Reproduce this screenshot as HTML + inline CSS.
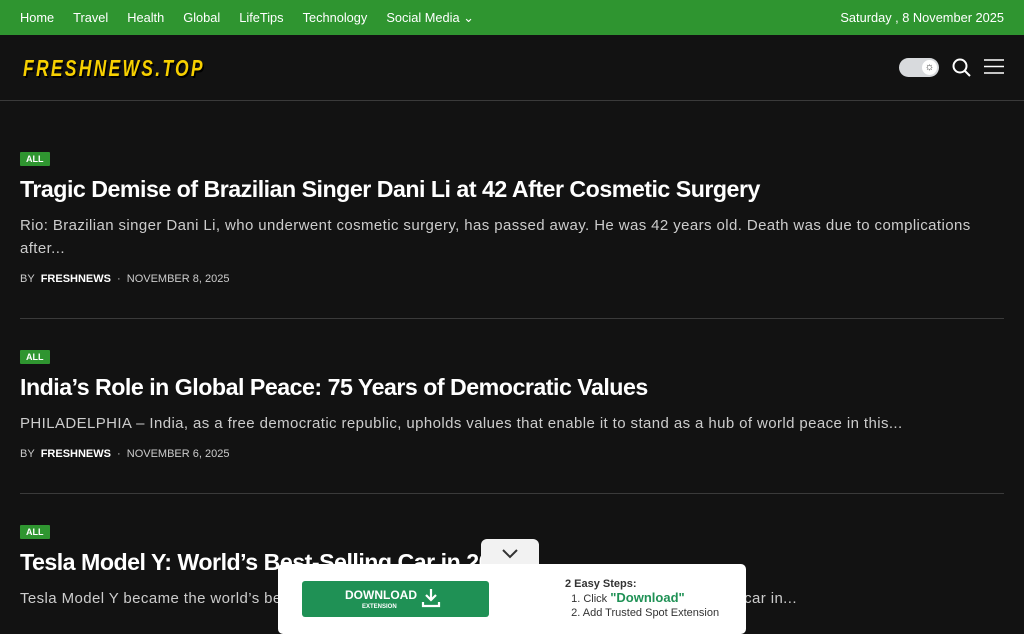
<!DOCTYPE html>
<html><head><meta charset="utf-8"><style>
*{margin:0;padding:0;box-sizing:border-box}
body{width:1024px;height:629px;overflow:hidden;background:#121212;font-family:"Liberation Sans",sans-serif;color:#fff;position:relative}
.top{height:35px;background:#2f9530;display:flex;align-items:center;padding:0 20px;font-size:12.8px}
.top a{margin-right:19px;color:#fff}
.top .date{margin-left:auto}
.hdr{height:66px;border-bottom:1px solid #3a3a3a;position:relative}
.art{position:absolute;left:20px;right:20px}
.tag{display:inline-block;background:#2f9530;color:#fff;font-size:9px;font-weight:bold;padding:2px 6px;border-radius:1px}
h2{font-size:23.2px;font-weight:bold;letter-spacing:-0.5px;margin-top:7px;line-height:30px}
p{color:#ccc;font-size:15px;line-height:23px;margin-top:10px;letter-spacing:0.4px}
.meta{font-size:11px;color:#ccc;margin-top:13px}
.meta b{color:#fff;margin:0 6px}
hr{position:absolute;left:20px;right:20px;border:0;border-top:1px solid #3a3a3a}
</style></head><body>
<div class="top"><a>Home</a><a>Travel</a><a>Health</a><a>Global</a><a>LifeTips</a><a>Technology</a><a>Social Media ⌄</a><span class="date">Saturday , 8 November 2025</span></div>
<div class="hdr">
<div style="position:absolute;left:23px;top:20px;font-size:23px;font-weight:900;font-style:italic;color:#f7d000;letter-spacing:3px;text-shadow:2px 2px 0 #000;transform:scaleX(0.76);transform-origin:left">FRESHNEWS.TOP</div>
<div style="position:absolute;left:899px;top:23px;width:40px;height:19px;border-radius:10px;background:#d8dadd"><div style="position:absolute;right:2px;top:2px;width:15px;height:15px;border-radius:50%;background:#fff;color:#333;font-size:11px;text-align:center;line-height:15px">☼</div></div>
<svg style="position:absolute;left:952px;top:23px" width="19" height="19" viewBox="0 0 19 19"><circle cx="8" cy="8" r="6.5" stroke="#fff" stroke-width="2" fill="none"/><line x1="13" y1="13" x2="18" y2="18" stroke="#fff" stroke-width="2"/></svg>
<svg style="position:absolute;left:984px;top:24px" width="20" height="16"><path d="M0 1H20M0 7.5H20M0 14H20" stroke="#fff" stroke-width="1.6"/></svg>
</div>
<div class="art" style="top:149px"><span class="tag">ALL</span><h2>Tragic Demise of Brazilian Singer Dani Li at 42 After Cosmetic Surgery</h2><p>Rio: Brazilian singer Dani Li, who underwent cosmetic surgery, has passed away. He was 42 years old. Death was due to complications after...</p><div class="meta">BY<b>FRESHNEWS</b>· &nbsp;NOVEMBER 8, 2025</div></div>
<hr style="top:318px">
<div class="art" style="top:347px"><span class="tag">ALL</span><h2>India’s Role in Global Peace: 75 Years of Democratic Values</h2><p>PHILADELPHIA – India, as a free democratic republic, upholds values that enable it to stand as a hub of world peace in this...</p><div class="meta">BY<b>FRESHNEWS</b>· &nbsp;NOVEMBER 6, 2025</div></div>
<hr style="top:493px">
<div class="art" style="top:522px"><span class="tag">ALL</span><h2>Tesla Model Y: World’s Best-Selling Car in 2024</h2><p>Tesla Model Y became the world’s best-selling car in 2024, surpassing others to become the most sold car in...</p></div>
<div style="position:absolute;left:481px;top:539px;width:58px;height:30px;background:#f2f2f2;border-radius:6px 6px 0 0;text-align:center"><svg width="16" height="10" style="margin-top:10px"><path d="M1 1L8 8L15 1" stroke="#333" stroke-width="2" fill="none"/></svg></div>
<div style="position:absolute;left:278px;top:564px;width:468px;height:70px;background:#fff;border-radius:5px">
<div style="position:absolute;left:24px;top:17px;width:187px;height:36px;background:#1f9155;border-radius:3px;color:#fff;text-align:center">
<div style="position:absolute;left:43px;top:7px;font-size:12px;font-weight:bold">DOWNLOAD</div><div style="position:absolute;left:60px;top:23px;font-size:6px;font-weight:bold">EXTENSION</div>
<svg style="position:absolute;left:119px;top:7px" width="20" height="20"><path d="M10 1V12M5 7L10 12L15 7M2 14V18H18V14" stroke="#fff" stroke-width="2.2" fill="none"/></svg></div>
<div style="position:absolute;left:287px;top:13px;font-size:11px;color:#333;line-height:14px"><b>2 Easy Steps:</b><br>&nbsp;&nbsp;1. Click <b style="color:#1f9155;font-size:13px">"Download"</b><br>&nbsp;&nbsp;2. Add Trusted Spot Extension</div>
</div>
</body></html>
